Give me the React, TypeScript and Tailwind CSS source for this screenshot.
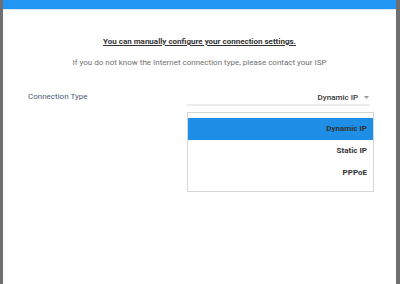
import React from 'react';

const options = ['Dynamic IP', 'Static IP', 'PPPoE'];

const App = (): React.ReactElement => {
  return (
    <div className="w-[400px] h-[284px] bg-[#6f6f6f] pl-[3px] pr-[4px] overflow-hidden" style={{ fontFamily: 'Roboto, "Liberation Sans", sans-serif' }}>
      <div className="h-full bg-white flex flex-col">
        <div className="h-[9px] bg-[#2196f3]" />
        <div className="h-px bg-[#dbe9f5]" />

        <div className="mt-[27px] text-center">
          <p className="text-[8px] leading-[10px] font-bold text-[#333] underline underline-offset-1">
            You can manually configure your connection settings.
          </p>
          <p className="mt-[11px] text-[8px] leading-[10px] text-[#6f6f6f]">
            If you do not know the Internet connection type, please contact your ISP
          </p>
        </div>

        <div className="mt-[24px] flex items-end pl-[25px] pr-[26px]">
          <span className="w-[159px] text-[8px] leading-[10px] text-[#4b5b78] pb-[4px]">Connection Type</span>
          <div className="flex-1 flex items-center justify-end gap-[6px] border-b-2 border-[#ececec] pb-[1px] pr-[1px]">
            <span className="text-[8px] leading-[10px] font-medium text-[#333]">Dynamic IP</span>
            <svg width="5" height="3" viewBox="0 0 5 3" className="mb-[1px]">
              <path d="M0 0 L5 0 L2.5 3 Z" fill="#9a9a9a" />
            </svg>
          </div>
        </div>

        <div className="mt-[6px] ml-[184px] mr-[22px] border border-[#d6d6d6] pt-[5px] pb-[7px]">
          {options.map((o, i) => (
            <div
              key={o}
              className={`h-[22px] flex items-center justify-end pr-[6px] text-[8px] font-bold text-[#333] ${i === 0 ? 'bg-[#1e8ee6]' : ''}`}
            >
              {o}
            </div>
          ))}
        </div>
      </div>
    </div>
  );
};

export default App;
